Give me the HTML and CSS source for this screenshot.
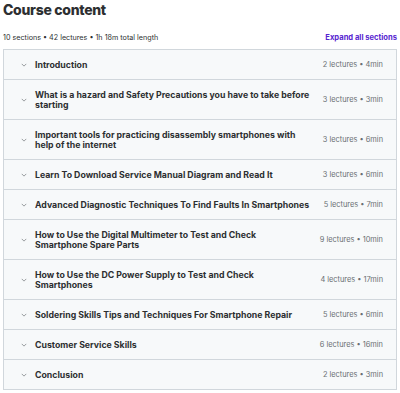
FILE: index.html
```html
<!DOCTYPE html>
<html lang="en">
<head>
    <meta charset="UTF-8">
    <meta name="viewport" content="width=device-width, initial-scale=1.0">
    <title>Course content</title>
    <link rel="stylesheet" href="styles.css">
</head>
<body>
    <div class="curriculum">
        <h2>Course content</h2>

        <div class="summary">
            <span>10 sections • 42 lectures • 1h 18m total length</span>
            <button class="expand">Expand all sections</button>
        </div>

        <div class="sections">
            <div class="section">
                <svg class="chevron" viewBox="0 0 8 5"><path d="M1 1l3 3 3-3"/></svg>
                <div class="title">Introduction</div>
                <div class="meta">2 lectures • 4min</div>
            </div>
            <div class="section">
                <svg class="chevron" viewBox="0 0 8 5"><path d="M1 1l3 3 3-3"/></svg>
                <div class="title">What is a hazard and Safety Precautions you have to take before starting</div>
                <div class="meta">3 lectures • 3min</div>
            </div>
            <div class="section">
                <svg class="chevron" viewBox="0 0 8 5"><path d="M1 1l3 3 3-3"/></svg>
                <div class="title">Important tools for practicing disassembly smartphones with help of the internet</div>
                <div class="meta">3 lectures • 6min</div>
            </div>
            <div class="section">
                <svg class="chevron" viewBox="0 0 8 5"><path d="M1 1l3 3 3-3"/></svg>
                <div class="title">Learn To Download Service Manual Diagram and Read It</div>
                <div class="meta">3 lectures • 6min</div>
            </div>
            <div class="section">
                <svg class="chevron" viewBox="0 0 8 5"><path d="M1 1l3 3 3-3"/></svg>
                <div class="title">Advanced Diagnostic Techniques To Find Faults In Smartphones</div>
                <div class="meta">5 lectures • 7min</div>
            </div>
            <div class="section">
                <svg class="chevron" viewBox="0 0 8 5"><path d="M1 1l3 3 3-3"/></svg>
                <div class="title">How to Use the Digital Multimeter to Test and Check Smartphone Spare Parts</div>
                <div class="meta">9 lectures • 10min</div>
            </div>
            <div class="section">
                <svg class="chevron" viewBox="0 0 8 5"><path d="M1 1l3 3 3-3"/></svg>
                <div class="title">How to Use the DC Power Supply to Test and Check Smartphones</div>
                <div class="meta">4 lectures • 17min</div>
            </div>
            <div class="section">
                <svg class="chevron" viewBox="0 0 8 5"><path d="M1 1l3 3 3-3"/></svg>
                <div class="title">Soldering Skills Tips and Techniques For Smartphone Repair</div>
                <div class="meta">5 lectures • 6min</div>
            </div>
            <div class="section">
                <svg class="chevron" viewBox="0 0 8 5"><path d="M1 1l3 3 3-3"/></svg>
                <div class="title">Customer Service Skills</div>
                <div class="meta">6 lectures • 16min</div>
            </div>
            <div class="section">
                <svg class="chevron" viewBox="0 0 8 5"><path d="M1 1l3 3 3-3"/></svg>
                <div class="title">Conclusion</div>
                <div class="meta">2 lectures • 3min</div>
            </div>
        </div>
    </div>
</body>
</html>
```

FILE: styles.css
```css
body {
    margin: 0;
    background: #fff;
    font-family: Inter, "Noto Sans", sans-serif;
    color: #2d2f31;
}
.curriculum {
    padding: 0 3px;
}
h2 {
    margin: 0;
    padding-top: 1px;
    font-size: 14px;
    font-weight: 800;
    line-height: 18px;
    letter-spacing: -0.3px;
}
.summary {
    display: flex;
    justify-content: space-between;
    align-items: center;
    margin-top: 13px;
    height: 11px;
    font-size: 7.2px;
    color: #2d2f31;
}
.expand {
    padding: 0;
    border: none;
    background: none;
    font-family: inherit;
    font-size: 7.6px;
    font-weight: 700;
    color: #5624d0;
    cursor: pointer;
}
.sections {
    margin-top: 6px;
    border: 1px solid #d1d7dc;
    border-top: none;
}
.section {
    display: flex;
    align-items: center;
    border-top: 1px solid #d1d7dc;
    background: #f7f9fa;
    padding: 9.5px 13px 9.5px 17px;
}
.chevron {
    flex: none;
    width: 6px;
    height: 4px;
    margin-right: 8px;
    fill: none;
    stroke: #6a6f73;
    stroke-width: 0.9;
}
.title {
    flex: 1;
    font-size: 8.75px;
    font-weight: 700;
    line-height: 10px;
}
.meta {
    flex: none;
    margin-left: 13px;
    font-size: 7.4px;
    line-height: 10px;
    color: #6a6f73;
    white-space: nowrap;
}
```
